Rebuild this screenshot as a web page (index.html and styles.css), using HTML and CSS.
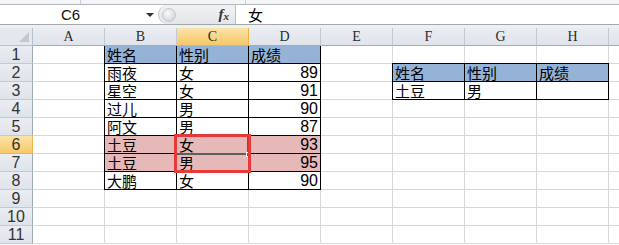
FILE: index.html
```html
<!DOCTYPE html>
<html lang="zh-CN">
<head>
    <meta charset="UTF-8">
    <title>Book1 - Excel</title>
    <link rel="stylesheet" href="styles.css">
</head>
<body>
    <div class="toolbar-edge">
        <span class="sep" style="left: 80px"></span>
        <span class="sep" style="left: 245px"></span>
    </div>

    <div class="formula-bar">
        <div class="name-box">
            <span class="name">C6</span>
            <span class="drop"></span>
        </div>
        <div class="fx-zone">
            <span class="knob"></span>
            <span class="fx">f<sub>x</sub></span>
        </div>
        <div class="formula-input">女</div>
    </div>
    <div class="bar-gap"></div>

    <div class="sheet">
        <!-- column headers -->
        <div class="corner"><span class="tri"></span></div>
        <div class="ch">A</div>
        <div class="ch">B</div>
        <div class="ch sel">C</div>
        <div class="ch">D</div>
        <div class="ch">E</div>
        <div class="ch">F</div>
        <div class="ch">G</div>
        <div class="ch">H</div>
        <div class="ch"></div>

        <!-- 1 -->
        <div class="rh">1</div>
        <div class="c"></div>
        <div class="c t hd first">姓名</div>
        <div class="c t hd">性别</div>
        <div class="c t hd">成绩</div>
        <div class="c"></div><div class="c"></div><div class="c"></div><div class="c"></div><div class="c"></div>

        <!-- 2 -->
        <div class="rh">2</div>
        <div class="c"></div>
        <div class="c t first">雨夜</div>
        <div class="c t">女</div>
        <div class="c t num">89</div>
        <div class="c"></div>
        <div class="c t hd first top">姓名</div>
        <div class="c t hd top">性别</div>
        <div class="c t hd top">成绩</div>
        <div class="c"></div>

        <!-- 3 -->
        <div class="rh">3</div>
        <div class="c"></div>
        <div class="c t first">星空</div>
        <div class="c t">女</div>
        <div class="c t num">91</div>
        <div class="c"></div>
        <div class="c t first">土豆</div>
        <div class="c t">男</div>
        <div class="c t"></div>
        <div class="c"></div>

        <!-- 4 -->
        <div class="rh">4</div>
        <div class="c"></div>
        <div class="c t first">过儿</div>
        <div class="c t">男</div>
        <div class="c t num">90</div>
        <div class="c"></div><div class="c"></div><div class="c"></div><div class="c"></div><div class="c"></div>

        <!-- 5 -->
        <div class="rh">5</div>
        <div class="c"></div>
        <div class="c t first">阿文</div>
        <div class="c t">男</div>
        <div class="c t num">87</div>
        <div class="c"></div><div class="c"></div><div class="c"></div><div class="c"></div><div class="c"></div>

        <!-- 6 -->
        <div class="rh sel">6</div>
        <div class="c"></div>
        <div class="c t pk first">土豆</div>
        <div class="c t pk">女</div>
        <div class="c t pk num">93</div>
        <div class="c"></div><div class="c"></div><div class="c"></div><div class="c"></div><div class="c"></div>

        <!-- 7 -->
        <div class="rh">7</div>
        <div class="c"></div>
        <div class="c t pk first">土豆</div>
        <div class="c t pk">男</div>
        <div class="c t pk num">95</div>
        <div class="c"></div><div class="c"></div><div class="c"></div><div class="c"></div><div class="c"></div>

        <!-- 8 -->
        <div class="rh">8</div>
        <div class="c"></div>
        <div class="c t first">大鹏</div>
        <div class="c t">女</div>
        <div class="c t num">90</div>
        <div class="c"></div><div class="c"></div><div class="c"></div><div class="c"></div><div class="c"></div>

        <!-- 9 -->
        <div class="rh">9</div>
        <div class="c"></div><div class="c"></div><div class="c"></div><div class="c"></div><div class="c"></div><div class="c"></div><div class="c"></div><div class="c"></div><div class="c"></div>

        <!-- 10 -->
        <div class="rh">10</div>
        <div class="c"></div><div class="c"></div><div class="c"></div><div class="c"></div><div class="c"></div><div class="c"></div><div class="c"></div><div class="c"></div><div class="c"></div>

        <!-- 11 -->
        <div class="rh">11</div>
        <div class="c"></div><div class="c"></div><div class="c"></div><div class="c"></div><div class="c"></div><div class="c"></div><div class="c"></div><div class="c"></div><div class="c"></div>

        <!-- overlays -->
        <div class="active-cell"><span class="handle"></span></div>
        <div class="red-box"></div>
    </div>
</body>
</html>
```

FILE: styles.css
```css
body {
    margin: 0;
    background: #ffffff;
    font-family: 'Liberation Sans', 'Noto Sans CJK SC', sans-serif;
    overflow: hidden;
    width: 619px;
    height: 245px;
}

/* top of the ribbon, mostly cut off */
.toolbar-edge {
    position: relative;
    height: 4px;
    background: #f4f5f7;
    border-bottom: 1px solid #b4b8bd;
}

.toolbar-edge .sep {
    position: absolute;
    top: 0;
    width: 1px;
    height: 4px;
    background: #c9cdd2;
}

.formula-bar {
    display: flex;
    height: 19px;
    background: #ffffff;
    border-bottom: 1px solid #a3a7ac;
}

.name-box {
    width: 158px;
    display: flex;
    align-items: center;
    position: relative;
}

.name-box .name {
    margin-left: 61px;
    font-size: 15px;
    color: #111;
}

.name-box .drop {
    position: absolute;
    left: 146px;
    top: 8px;
    border-left: 4px solid transparent;
    border-right: 4px solid transparent;
    border-top: 4px solid #333;
}

.fx-zone {
    width: 78px;
    display: flex;
    align-items: center;
    justify-content: space-between;
    background: linear-gradient(#f1f2f4, #e3e5e8);
    border-radius: 10px 0 0 10px;
    border-left: 1px solid #c2c6cb;
    border-right: 1px solid #b9bdc2;
    box-sizing: border-box;
    padding: 0 6px 0 3px;
}

.fx-zone .knob {
    width: 12px;
    height: 12px;
    border-radius: 50%;
    background: radial-gradient(circle at 40% 35%, #fafafa, #c8cbcf);
    border: 1px solid #c4c7cb;
}

.fx-zone .fx {
    font-family: 'Liberation Serif', serif;
    font-style: italic;
    font-weight: bold;
    font-size: 15px;
    color: #333;
}

.fx-zone .fx sub {
    font-size: 11px;
    vertical-align: -1px;
}

.formula-input {
    padding-left: 12px;
    font-family: 'Noto Sans CJK SC', sans-serif;
    font-size: 15px;
    line-height: 19px;
    color: #000;
}

.bar-gap {
    height: 3px;
    background: #eef0f2;
}

/* the worksheet */
.sheet {
    position: relative;
    display: grid;
    grid-template-columns: 33px repeat(9, 72px);
    grid-auto-rows: 18px;
}

.sheet > div {
    box-sizing: border-box;
}

.corner {
    position: relative;
    background: #e4e8ee;
    border-right: 1px solid #b8c2cf;
    border-bottom: 1px solid #b8c2cf;
}

.corner .tri {
    position: absolute;
    right: 3px;
    bottom: 3px;
    border-left: 10px solid transparent;
    border-bottom: 10px solid #c3c8cf;
}

.ch, .rh {
    background: linear-gradient(#eaedf2, #dfe4ea);
    border-right: 1px solid #c1c9d3;
    border-bottom: 1px solid #c1c9d3;
    color: #2b2b2b;
    text-align: center;
}

.ch {
    font-family: 'Liberation Serif', serif;
    font-size: 14px;
    line-height: 17px;
    border-bottom-color: #9eacbd;
}

.rh {
    font-size: 16px;
    line-height: 18px;
    color: #333;
    border-right-color: #9eacbd;
}

.ch.sel, .rh.sel {
    background: linear-gradient(#fbe3a8, #f6c868);
    border-right-color: #f0b246;
    border-bottom-color: #f0b246;
}

.c {
    border-right: 1px solid #d8d8d8;
    border-bottom: 1px solid #d8d8d8;
    font-family: 'Noto Sans CJK SC', sans-serif;
    font-size: 15px;
    line-height: 18px;
    padding-left: 2px;
    color: #000;
    white-space: nowrap;
}

.c.t {
    border-right-color: #000;
    border-bottom-color: #000;
}

.c.first {
    box-shadow: -1px 0 0 #000;
}

.c.top {
    box-shadow: 0 -1px 0 #000;
}

.c.first.top {
    box-shadow: -1px 0 0 #000, 0 -1px 0 #000, -1px -1px 0 #000;
}

.c.hd {
    background: #95b3d7;
}

.c.pk {
    background: #e6b8b7;
}

.c.num {
    font-family: 'Liberation Sans', sans-serif;
    font-size: 16px;
    text-align: right;
    padding: 0 2px 0 0;
}

/* selected cell C6 */
.active-cell {
    position: absolute;
    grid-column: 4 / 5;
    grid-row: 7 / 8;
    left: -1px;
    top: -1px;
    right: 0;
    bottom: -1px;
    border-right: 2px solid #56625c;
    border-bottom: 2px solid #56625c;
}

.active-cell .handle {
    position: absolute;
    right: -4px;
    bottom: -4px;
    width: 5px;
    height: 5px;
    background: #56625c;
    border: 1px solid #fff;
    box-sizing: border-box;
}

/* red mark over C6:C7 */
.red-box {
    position: absolute;
    grid-column: 4 / 5;
    grid-row: 7 / 9;
    left: -3px;
    top: -2px;
    right: -2px;
    bottom: -1px;
    border: 3px solid #e53a3a;
}
```
